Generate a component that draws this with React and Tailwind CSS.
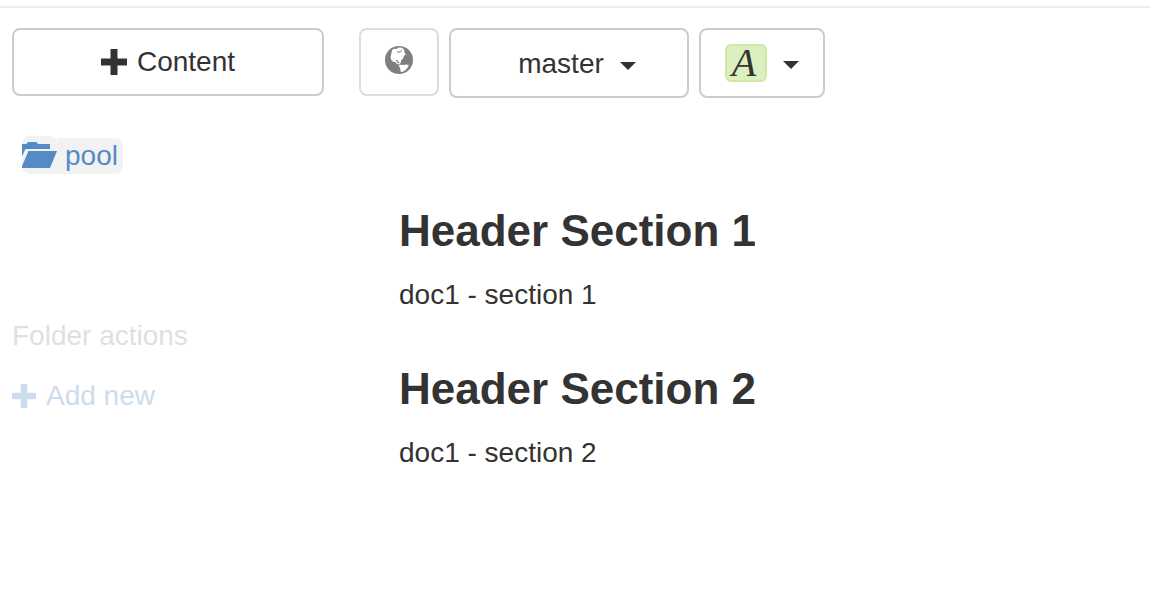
function PlusIcon({ className }) {
  return (
    <svg viewBox="0 0 26 26" className={className} fill="currentColor" aria-hidden="true">
      <path d="M9.5 0h7v9.5H26v7h-9.5V26h-7v-9.5H0v-7h9.5z" />
    </svg>
  );
}

function GlobeIcon() {
  return (
    <svg viewBox="0 0 28 28" className="size-7" aria-hidden="true">
      <circle cx="14" cy="14" r="14" fill="#7f7f7f" />
      <path
        fill="#fff"
        d="M6.300 7.500 7.200 3.800 9.500 2.800l2.200.2L13.500 1.600l3.500.2L19 3.800l.6 3 1.200 2-1.600.8-1.500 3.200-1.600 1.700-.3 2.300-1.300 1.400-1 .2-2-.8-1.300-1.600-2.200-.2-2-2.300-.4-2.600z"
      />
      <path fill="#fff" d="m13.600 19.600 1.900-.8 3 .3 2.500-.5 2.800.4-1 2.500-2.300 2.600-3 1.900-1.800-.2-.5-3.400z" />
      <path
        fill="#7f7f7f"
        d="m12 6.400.4-1.200 2.200.3 1.300-.5.500 1-2.100.6zM15.600 3.600l1.500.2-.3 1.100zM10.500 14.200l1.900-.2 1.100 2 .9.300-.3 1.200-1.600-.8-.8-1.500z"
      />
    </svg>
  );
}

function FolderIcon() {
  return (
    <svg viewBox="0 0 35 26" className="h-[26px] w-[35px]" fill="currentColor" aria-hidden="true">
      <path d="M0 2h4.500Q5 0 7 0h6.500q2 0 2.500 2h12v5H4.200Q3.300 7 2.800 8.200L0 14.500z" />
      <path d="M6.500 9H35l-7 17H0v-2z" />
    </svg>
  );
}

function Caret() {
  return (
    <svg viewBox="0 0 16 8" className="mt-1 h-2 w-4" fill="currentColor" aria-hidden="true">
      <path d="M0 0h16L8 8z" />
    </svg>
  );
}

const sections = [
  { title: "Header Section 1", text: "doc1 - section 1" },
  { title: "Header Section 2", text: "doc1 - section 2" },
];

export default function App() {
  return (
    <div className="bg-white pt-1.5 font-['Liberation_Sans',Arial,sans-serif] text-[28px] leading-10 text-[#333]">
      <div className="flex gap-[35px] border-t-2 border-[#eee] px-3 pt-5">
        <aside className="w-[312px] shrink-0">
          <button
            type="button"
            className="flex h-[68px] w-full items-center justify-center gap-2.5 rounded-lg border-2 border-[#ccc]"
          >
            <PlusIcon className="size-[26px]" />
            <span>Content</span>
          </button>
          <nav className="mt-10 ml-2.5 flex">
            <a href="#pool" className="flex h-[38px] items-end text-[#548bc7]">
              <span className="flex h-[38px] items-center rounded-l-lg rounded-tr-lg bg-[#f2f2f2]">
                <FolderIcon />
              </span>
              <span className="h-9 rounded-r-lg bg-[#f2f2f2] pr-[5px] pl-2 leading-9">pool</span>
            </a>
          </nav>
          <h2 className="mt-[142px] text-[#dfdfdf]">Folder actions</h2>
          <a href="#add" className="mt-5 flex items-center gap-2.5 text-[#cddcec]">
            <PlusIcon className="size-6" />
            <span>Add new</span>
          </a>
        </aside>

        <main className="min-w-0 flex-1">
          <div className="flex items-start gap-2.5">
            <button
              type="button"
              aria-label="Language"
              className="flex h-[68px] w-20 items-center justify-center rounded-lg border-2 border-[#ddd] pb-1"
            >
              <GlobeIcon />
            </button>
            <button
              type="button"
              className="flex h-[70px] w-60 items-center justify-center gap-4 rounded-lg border-2 border-[#ccc] pt-0.5 pl-4"
            >
              <span>master</span>
              <Caret />
            </button>
            <button
              type="button"
              className="flex h-[70px] w-[126px] items-center justify-center gap-4 rounded-lg border-2 border-[#ccc]"
            >
              <span className="flex h-[38px] w-[42px] items-center justify-center rounded-md border-2 border-[#cfe8a8] bg-[#dcf0bf] pr-1 font-['Liberation_Serif',serif] text-[40px] italic">
                A
              </span>
              <Caret />
            </button>
          </div>
          <div className="pt-[109px] pl-10">
            {sections.map((section) => (
              <section key={section.title} className="mb-[50px]">
                <h1 className="text-[44px] leading-[48px] font-bold">{section.title}</h1>
                <p className="mt-5">{section.text}</p>
              </section>
            ))}
          </div>
        </main>
      </div>
    </div>
  );
}
